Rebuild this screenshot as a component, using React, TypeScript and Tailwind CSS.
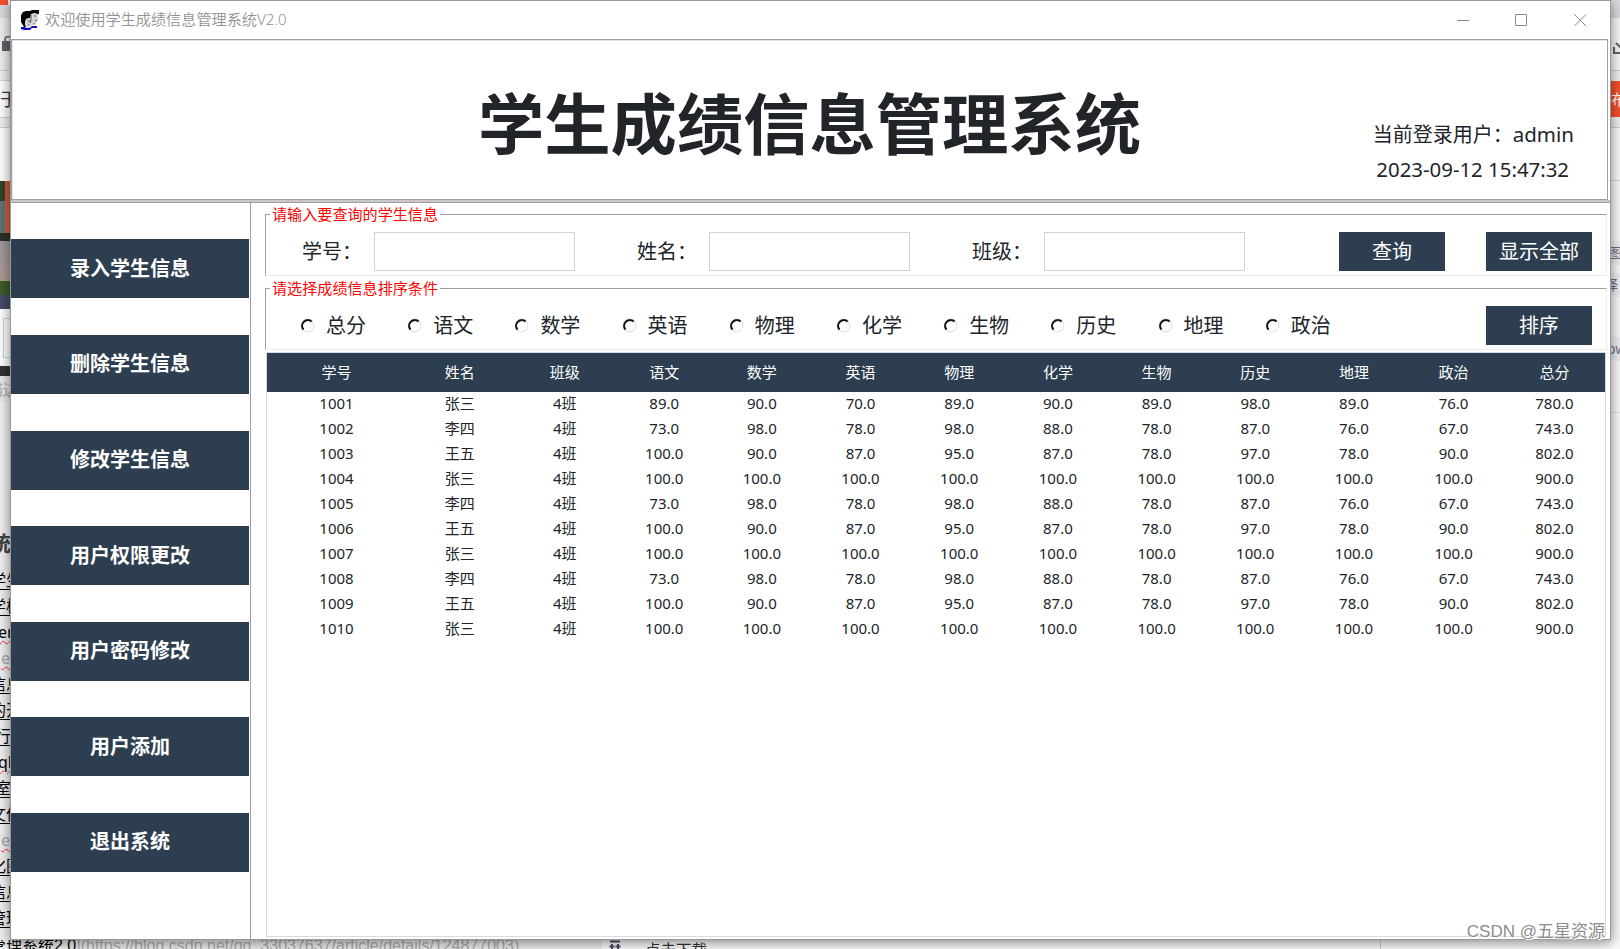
import { useState } from "react";

const FONT =
  "[font-family:'Noto_Sans','Noto_Sans_CJK_SC',sans-serif]";

const MENU = [
  "录入学生信息",
  "删除学生信息",
  "修改学生信息",
  "用户权限更改",
  "用户密码修改",
  "用户添加",
  "退出系统",
];

const SORT_KEYS = [
  "总分",
  "语文",
  "数学",
  "英语",
  "物理",
  "化学",
  "生物",
  "历史",
  "地理",
  "政治",
];

const COLUMNS = [
  { title: "学号", width: 139 },
  { title: "姓名", width: 107.5 },
  { title: "班级", width: 102.5 },
  { title: "语文", width: 96.5 },
  { title: "数学", width: 98.7 },
  { title: "英语", width: 98.7 },
  { title: "物理", width: 98.7 },
  { title: "化学", width: 98.7 },
  { title: "生物", width: 98.7 },
  { title: "历史", width: 98.7 },
  { title: "地理", width: 98.7 },
  { title: "政治", width: 100.5 },
  { title: "总分", width: 101.1 },
];

const ZHANG = ["100.0", "100.0", "100.0", "100.0", "100.0", "100.0", "100.0", "100.0", "100.0", "900.0"];
const LI = ["73.0", "98.0", "78.0", "98.0", "88.0", "78.0", "87.0", "76.0", "67.0", "743.0"];
const WANG = ["100.0", "90.0", "87.0", "95.0", "87.0", "78.0", "97.0", "78.0", "90.0", "802.0"];

const ROWS = [
  ["1001", "张三", "4班", "89.0", "90.0", "70.0", "89.0", "90.0", "89.0", "98.0", "89.0", "76.0", "780.0"],
  ["1002", "李四", "4班", ...LI],
  ["1003", "王五", "4班", ...WANG],
  ["1004", "张三", "4班", ...ZHANG],
  ["1005", "李四", "4班", ...LI],
  ["1006", "王五", "4班", ...WANG],
  ["1007", "张三", "4班", ...ZHANG],
  ["1008", "李四", "4班", ...LI],
  ["1009", "王五", "4班", ...WANG],
  ["1010", "张三", "4班", ...ZHANG],
];

// Lines of the editor that show to the left of the window
const EDITOR_LINES = [
  { text: "学生", kind: "link" },
  { text: "学校", kind: "link" },
  { text: "er", kind: "typo" },
  { text: "e", kind: "faint" },
  { text: "信息", kind: "link" },
  { text: "的开", kind: "link" },
  { text: "行", kind: "half" },
  { text: "ql", kind: "typo" },
  { text: "室", kind: "half" },
  { text: "文件", kind: "link" },
  { text: "e", kind: "faint" },
  { text: "化图", kind: "link" },
  { text: "信息", kind: "link" },
  { text: "管理", kind: "link" },
];

const LINE_STYLE: Record<string, string> = {
  link: "-ml-[10px] text-black underline decoration-1 underline-offset-[3px]",
  half: "-ml-[5px] text-black underline decoration-1 underline-offset-[3px]",
  typo: "-ml-[2px] text-black underline decoration-red-500 decoration-wavy decoration-1 underline-offset-2",
  faint: "ml-[1px] text-[#aaa] underline decoration-red-500 decoration-wavy decoration-1 underline-offset-2",
};

function AppIcon() {
  return (
    <svg width="20" height="20" viewBox="0 0 20 20" className="flex-none">
      <path d="M1 5 3 2 6 1h4l2-1h7v3l-1 2-5-1-3 4-4 1-1 5 1 3H4L1 12z" fill="#000" />
      <path d="M6 9l4-1 1-4 3-1 4 1v3l1 2-2 2v2l-2 2h-3l-2 3H6l1-3-2-3z" fill="#d6d6d6" />
      <path d="M11 5v5l-1 3M14 6h2M8 11h2M15 10.500h2" fill="none" stroke="#555" />
      <path d="M7 14l3 1M13 13l2 1" fill="none" stroke="#999" />
      <path d="M1 17h4l1 1h4l2-2h5v2h-5l-2 2H4l-3-1z" fill="#0c0cc4" />
    </svg>
  );
}

function Radio() {
  return (
    <svg width="15" height="15" viewBox="0 0 15 15" className="flex-none">
      <circle cx="7.5" cy="7.5" r="6.4" fill="#fff" stroke="#e6e6e6" strokeWidth="1.2" />
      <path d="M2.900 12A6.500 6.500 0 0 1 12 2.900" fill="none" stroke="#777" strokeWidth="1.2" />
      <path d="M3.600 11.500A5.600 5.600 0 0 1 11.500 3.600" fill="none" stroke="#111" strokeWidth="1.900" />
    </svg>
  );
}

function DarkButton({ children }: { children: string }) {
  return (
    <button className="h-[39px] w-[106px] flex-none bg-[#2d3e50] text-[20px] leading-none text-white">
      {children}
    </button>
  );
}

function Group({ title, children }: { title: string; children: React.ReactNode }) {
  return (
    <fieldset className="h-[70px] w-[1342px] min-w-0 border border-t-[#a0a0a0] border-r-[#ececec] border-b-[#ececec] border-l-[#a0a0a0] pl-[4px]">
      <legend className="h-4 px-[2px] text-[15.100px] leading-[17px] whitespace-nowrap text-[#ff0000]">
        {title}
      </legend>
      {children}
    </fieldset>
  );
}

function LeftEdge() {
  return (
    <div className="flex w-[10px] flex-none flex-col overflow-hidden bg-[#f0f0f0]">
      <div className="h-[5px] w-2 flex-none bg-[#f4502e]" />
      <div className="h-[13px] flex-none bg-[#dadce0]" />
      <div className="flex h-[52px] flex-none items-center bg-[#ebedf0] pl-[2px]">
        <svg width="12" height="16" viewBox="0 0 12 16" className="flex-none">
          <path d="M0 5h12v10H0z" fill="#5f6368" />
          <path d="M3 6V3.500a3 3 0 0 1 6 0V6" fill="none" stroke="#5f6368" strokeWidth="1.6" />
        </svg>
      </div>
      <div className="h-[11px] flex-none border-y border-[#d0d0d0] bg-[#efefef]" />
      <div className="flex h-9 flex-none items-center bg-white text-[18px] text-[#333]">
        <span>于</span>
      </div>
      <div className="h-[11px] flex-none border-y border-[#d0d0d0] bg-[#efefef]" />
      <div className="h-[53px] flex-none bg-white" />
      <div className="flex h-[20px] flex-none bg-[#31452f]">
        <div className="ml-auto w-[5px] bg-[#c55a3c]" />
      </div>
      <div className="flex h-[32px] flex-none bg-[#5d7474]">
        <div className="ml-auto w-[5px] bg-[#c8603f]" />
      </div>
      <div className="h-[8px] flex-none bg-[#2c3328]" />
      <div className="h-[40px] flex-none bg-linear-to-b from-[#9a9a9c] to-[#b29a94]" />
      <div className="h-[14px] flex-none bg-[#3d5a28]" />
      <div className="h-[14px] flex-none bg-[#454c66]" />
      <div className="flex h-[57px] flex-none items-center bg-white pl-[3px]">
        <div className="h-10 w-3 flex-none border border-[#c8d0dc]" />
      </div>
      <div className="h-[10px] flex-none bg-[#333]" />
      <div className="flex h-[26px] flex-none items-center bg-[#e8e8e8] text-[15px] text-[#aaa]">
        <span className="-ml-[12px] whitespace-nowrap">描边</span>
      </div>
      <div className="h-[128px] flex-none" />
      <div className="flex h-[37px] flex-none items-start text-[21px] leading-[26px] font-bold text-[#444]">
        <span className="-ml-[10px]">统</span>
      </div>
      {EDITOR_LINES.map((l, i) => (
        <div
          key={i}
          className="flex h-[26px] flex-none items-center text-[16px] leading-none whitespace-nowrap"
        >
          <span className={LINE_STYLE[l.kind]}>{l.text}</span>
        </div>
      ))}
    </div>
  );
}

function RightEdge() {
  return (
    <div className="flex w-[9px] flex-none flex-col overflow-hidden bg-[#fafafa] text-[14px] leading-none text-[#6b7088]">
      <div className="h-[18px] flex-none bg-[#dadce0]" />
      <div className="flex h-[52px] flex-none items-center bg-[#f8f8f8] pl-[2px]">
        <svg width="16" height="16" viewBox="0 0 16 16" className="mb-[-6px] flex-none">
          <path d="M1 8v6h14M8 1v8M3 4l5 5" fill="none" stroke="#5f6368" strokeWidth="2" />
        </svg>
      </div>
      <div className="h-[11px] flex-none border-t border-[#d0d0d0] bg-[#efefef]" />
      <div className="flex h-9 flex-none items-center bg-[#f4502e] text-[15px] text-white">布</div>
      <div className="h-[11px] flex-none border-b border-[#d0d0d0] bg-[#efefef]" />
      <div className="h-[53px] flex-none border-b border-[#d8d8d8]" />
      <div className="h-[60px] flex-none" />
      <div className="flex h-6 flex-none items-center bg-[#eeeff3]">
        <span className="-ml-[3px] whitespace-nowrap">图片</span>
      </div>
      <div className="h-2 flex-none" />
      <div className="flex h-6 flex-none items-center justify-end bg-[#eeeff3] pr-[2px]">译</div>
      <div className="h-10 flex-none" />
      <div className="flex h-6 flex-none items-center bg-[#eeeff3]">
        <span className="-ml-[4px]">ow</span>
      </div>
      <div className="h-[52px] flex-none border-b border-[#e2e2e2]" />
    </div>
  );
}

export default function App() {
  const [now] = useState("2023-09-12 15:47:32");

  return (
    <div
      className={`relative flex h-[949px] w-[1620px] flex-col overflow-hidden bg-[#ebebeb] text-[#212529] ${FONT}`}
    >
      <div className="flex h-[940px] flex-none">
        <LeftEdge />

        <div className="z-10 flex w-[1601px] flex-none flex-col border border-[#999] bg-white shadow-[0_2px_12px_rgba(0,0,0,0.5)]">
          <div className="flex h-[38px] flex-none items-center pl-[9px] text-[#929292]">
            <AppIcon />
            <span className="ml-[5px] pb-px text-[15.150px] leading-none [font-weight:350]">
              欢迎使用学生成绩信息管理系统V2.0
            </span>
            <svg width="130" height="13" viewBox="0 0 130 13" className="mr-[23px] ml-auto" fill="none" stroke="#888">
              <path d="M0 6.500h12M58.500.500h11v11h-11zM117.500.500l11.500 11.500M129 .500 117.500 12" />
            </svg>
          </div>

          <header className="mr-[2px] grid h-[161px] flex-none grid-cols-[1fr_700px_1fr] border border-[#a0a0a0] shadow-[inset_1px_1px_0_#e3e3e3]">
            <div />
            <h1 className="pt-[48px] text-center text-[66.3px] leading-[70px] font-bold whitespace-nowrap">
              学生成绩信息管理系统
            </h1>
            <div className="flex flex-col items-end pt-[77px] pr-[33px] text-[20px] leading-[35px]">
              <div className="whitespace-nowrap">
                当前登录用户：<span className="text-[20.500px]">admin</span>
              </div>
              <div className="mr-[5px] text-[20.400px] whitespace-nowrap">{now}</div>
            </div>
          </header>
          <div className="h-[3px] flex-none border-b border-[#a0a0a0] bg-[#c8c8c8]" />

          <div className="flex min-h-0 flex-1">
            <nav className="flex w-[240px] flex-none flex-col gap-[36.600px] border-r border-[#a0a0a0] pt-[36.400px] pr-[1px]">
              {MENU.map((m) => (
                <button
                  key={m}
                  className="h-[59px] flex-none bg-[#2d3e50] text-[20px] leading-none font-bold text-white"
                >
                  {m}
                </button>
              ))}
            </nav>

            <main className="flex flex-1 flex-col pt-[3px] pl-[14px]">
              <Group title="请输入要查询的学生信息">
                <div className="flex items-center pt-[10px] pl-[32px]">
                  {["学号：", "姓名：", "班级："].map((label) => (
                    <label key={label} className="flex w-[335px] flex-none items-center text-[20px] leading-none">
                      <span className="w-[72px] flex-none">{label}</span>
                      <input className="h-[39px] w-[201px] border border-[#ced4da] px-2 outline-none" />
                    </label>
                  ))}
                  <div className="ml-[32px] flex gap-[41px]">
                    <DarkButton>查询</DarkButton>
                    <DarkButton>显示全部</DarkButton>
                  </div>
                </div>
              </Group>

              <div className="h-1 flex-none" />

              <Group title="请选择成绩信息排序条件">
                <div className="flex items-center pt-[10px] pl-[30px]">
                  {SORT_KEYS.map((k) => (
                    <label key={k} className="flex w-[107.200px] flex-none items-center gap-[11px] text-[20px] leading-none">
                      <Radio />
                      <span className="pt-px">{k}</span>
                    </label>
                  ))}
                  <div className="ml-[114px]">
                    <DarkButton>排序</DarkButton>
                  </div>
                </div>
              </Group>

              <div className="mt-[2px] mb-[2px] ml-[1px] w-[1340px] flex-1 border border-[#d5dbe1]">
                <table className="w-full table-fixed border-collapse text-center text-[15px] leading-none">
                  <colgroup>
                    {COLUMNS.map((c, i) => (
                      <col key={i} style={{ width: c.width }} />
                    ))}
                  </colgroup>
                  <thead className="bg-[#2d3e50] text-white">
                    <tr className="h-[39px]">
                      {COLUMNS.map((c, i) => (
                        <th key={i} className="p-0 pb-px font-normal">
                          {c.title}
                        </th>
                      ))}
                    </tr>
                  </thead>
                  <tbody>
                    {ROWS.map((r) => (
                      <tr key={r[0]} className="h-[25px]">
                        {r.map((v, i) => (
                          <td key={i} className="p-0 pb-[2px]">
                            {v}
                          </td>
                        ))}
                      </tr>
                    ))}
                  </tbody>
                </table>
              </div>
            </main>
          </div>
        </div>

        <RightEdge />
      </div>

      <div className="flex flex-1 overflow-hidden bg-[#fafafa] leading-none">
        <div className="w-[602px] flex-none bg-[#ebebeb]">
          <div className="mt-[-2px] -ml-[10px] text-[16px] whitespace-nowrap text-[#aaa] [font-family:'Liberation_Sans','Noto_Sans_CJK_SC',sans-serif]">
            <span className="text-black">管理系统2.0</span>
            ](https://blog.csdn.net/qq_33037637/article/details/124877003)
          </div>
        </div>
        <div className="flex w-[779px] flex-none border-r border-[#ccc] pl-[6px] text-[15.500px] text-[#333]">
          <svg width="14" height="10" viewBox="0 0 14 10" className="flex-none">
            <path d="M2 1.500h10M4 9V4M10 9V4M1.500 6.500h5M7.500 6.500h5" fill="none" stroke="#4d4f66" strokeWidth="2" />
          </svg>
          <span className="mt-[3px] ml-[23px] whitespace-nowrap">点击下载</span>
        </div>
      </div>

      <div className="absolute right-[15px] bottom-[9px] z-20 text-[17px] leading-none text-[#8c8c8c] [font-family:'Liberation_Sans','Noto_Sans_CJK_SC',sans-serif] [text-shadow:1px_1px_0_#fff]">
        CSDN @五星资源
      </div>
    </div>
  );
}
